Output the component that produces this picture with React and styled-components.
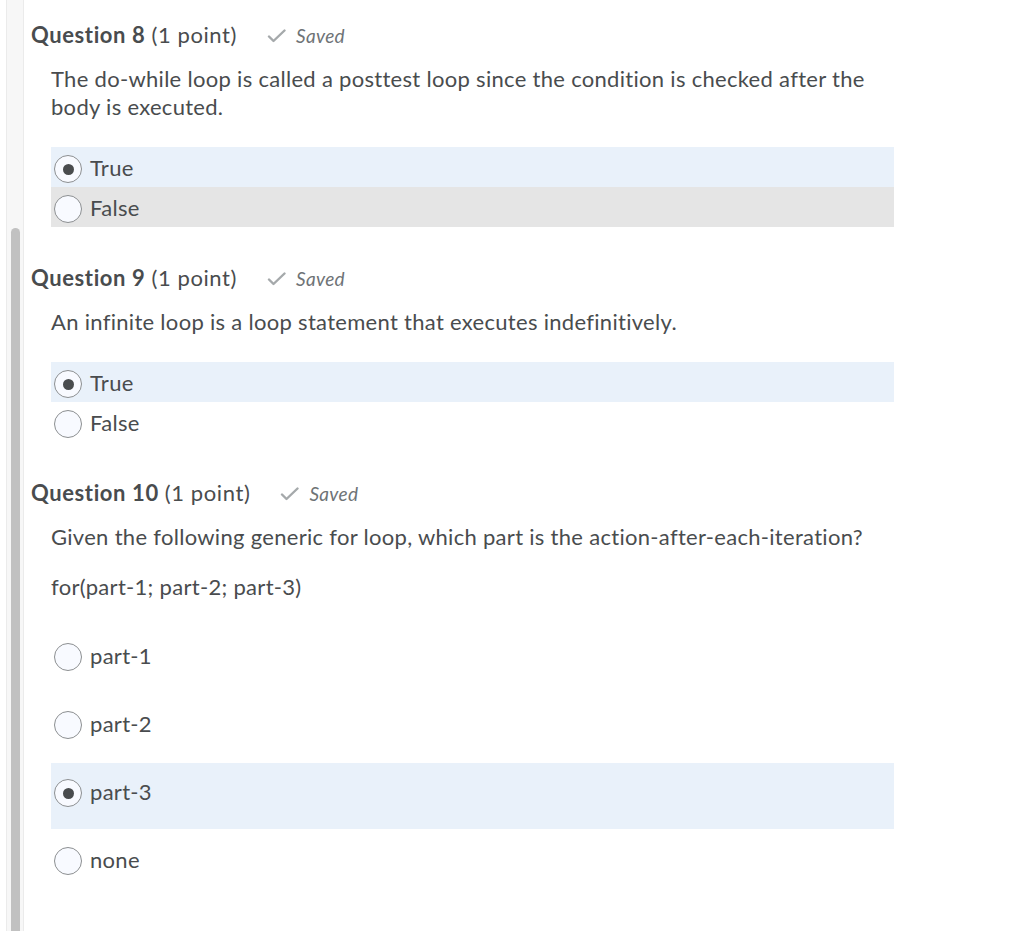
import styled, { createGlobalStyle } from "styled-components";

const GlobalStyle = createGlobalStyle`
    html, body {
        margin: 0;
        padding: 0;
        background: #ffffff;
    }
    body {
        font-family: Lato, "Noto Sans", sans-serif;
        color: #494c4e;
    }
`;

const Page = styled.div`
    display: flex;
    min-height: 931px;
    height: 931px;
    overflow: hidden;
`;

const Gutter = styled.div`
    flex: 0 0 16px;
    margin-left: 6px;
    background: #f7f7f7;
    border-left: 1px solid #ebebeb;
    border-right: 1px solid #ebebeb;
    padding-top: 228px;
    display: flex;
    flex-direction: column;
`;

const Thumb = styled.div`
    flex: 1;
    margin: 0 3px 0 4px;
    background: #c1c1c1;
    border-radius: 5px 5px 0 0;
`;

const Content = styled.main`
    flex: 1;
    padding: 21px 0 0 7px;
`;

const Question = styled.section`
    margin-bottom: 37px;
`;

const Heading = styled.h2`
    display: flex;
    align-items: baseline;
    margin: 0;
    font-size: 22px;
    line-height: 28px;
    letter-spacing: 0.6px;
    font-weight: 400;
    color: #494c4e;

    strong {
        font-weight: 700;
        margin-right: 6px;
    }
`;

const SavedTag = styled.span`
    display: inline-flex;
    align-items: baseline;
    gap: 10px;
    margin-left: 30px;
    font-size: 19px;
    letter-spacing: 0.3px;
    font-style: italic;
    color: #6e7376;

    svg {
        align-self: center;
    }
`;

const Prompt = styled.div`
    margin: 15px 0 0 20px;
    width: 830px;
    font-size: 22px;
    line-height: 28px;
    letter-spacing: 0.3px;

    p {
        margin: 0 0 22px 0;
    }
    p:last-child {
        margin-bottom: 0;
    }
`;

const Options = styled.div`
    margin: 26px 0 0 20px;
    width: 843px;
    display: flex;
    flex-direction: column;
    gap: ${p => (p.$spacious ? "2px" : "0")};
`;

const Option = styled.label`
    display: flex;
    align-items: center;
    gap: 8px;
    height: 40px;
    padding: ${p => (p.$spacious ? "8px 0 18px 3px" : "0 0 0 3px")};
    background: ${p => p.$bg || "transparent"};
    font-size: 22px;
    letter-spacing: 0.3px;
    color: #494c4e;
`;

const Radio = styled.span`
    box-sizing: border-box;
    flex: 0 0 28px;
    width: 28px;
    height: 28px;
    margin-top: 4px;
    border-radius: 50%;
    border: 1px solid #8c8f91;
    background: #f8faff;
    display: flex;
    align-items: center;
    justify-content: center;

    &::after {
        content: "";
        width: 11px;
        height: 11px;
        border-radius: 50%;
        background: #494c4e;
        display: ${p => (p.$checked ? "block" : "none")};
    }
`;

function Check() {
    return (
        <svg width="19" height="14" viewBox="0 0 19 14" aria-hidden="true">
            <polyline
                points="2,7.5 6.5,12 17.5,1.5"
                fill="none"
                stroke="#a5a9ab"
                strokeWidth="2.4"
                strokeLinecap="round"
                strokeLinejoin="round"
            />
        </svg>
    );
}

const questions = [
    {
        number: 8,
        prompt: ["The do-while loop is called a posttest loop since the condition is checked after the body is executed."],
        options: [
            { label: "True", checked: true, bg: "#e9f1fa" },
            { label: "False", bg: "#e5e5e5" },
        ],
    },
    {
        number: 9,
        prompt: ["An infinite loop is a loop statement that executes indefinitively."],
        options: [
            { label: "True", checked: true, bg: "#e9f1fa" },
            { label: "False" },
        ],
    },
    {
        number: 10,
        prompt: [
            "Given the following generic for loop, which part is the action-after-each-iteration?",
            "for(part-1; part-2; part-3)",
        ],
        spacious: true,
        options: [
            { label: "part-1" },
            { label: "part-2" },
            { label: "part-3", checked: true, bg: "#e9f1fa" },
            { label: "none" },
        ],
    },
];

export default function App() {
    return (
        <>
            <GlobalStyle />
            <Page>
                <Gutter>
                    <Thumb />
                </Gutter>

                <Content>
                    {questions.map(q => (
                        <Question key={q.number}>
                            <Heading>
                                <strong>Question {q.number}</strong>(1 point)
                                <SavedTag>
                                    <Check />
                                    Saved
                                </SavedTag>
                            </Heading>

                            <Prompt>
                                {q.prompt.map((line, i) => (
                                    <p key={i}>{line}</p>
                                ))}
                            </Prompt>

                            <Options $spacious={q.spacious}>
                                {q.options.map(opt => (
                                    <Option key={opt.label} $bg={opt.bg} $spacious={q.spacious}>
                                        <Radio $checked={opt.checked} />
                                        {opt.label}
                                    </Option>
                                ))}
                            </Options>
                        </Question>
                    ))}
                </Content>
            </Page>
        </>
    );
}
